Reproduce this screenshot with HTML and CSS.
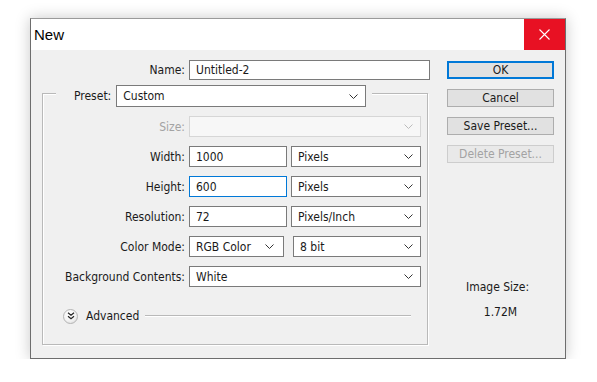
FILE: index.html
```html
<!DOCTYPE html>
<html lang="en">
<head>
  <meta charset="UTF-8">
  <title>New</title>
  <link rel="stylesheet" href="styles.css">
</head>
<body>
  <div class="window">
    <div class="titlebar">
      <span class="title">New</span>
      <div class="close">
        <svg width="11" height="11" viewBox="0 0 11 11"><path d="M0.5 0.5 L10.5 10.5 M10.5 0.5 L0.5 10.5" stroke="#fff" stroke-width="1.1" fill="none"/></svg>
      </div>
    </div>

    <div class="client">
      <div class="form">
        <div class="name-row">
          <span class="lbl">Name:</span>
          <input class="field" type="text" value="Untitled-2">
        </div>

        <div class="group">
          <div class="legend">
            <span class="lbl">Preset:</span>
            <div class="select preset">
              <span>Custom</span>
              <svg class="chev" width="9" height="5" viewBox="0 0 9 5"><path d="M0.5 0.5 L4.5 4.5 L8.5 0.5" fill="none" stroke="#333"/></svg>
            </div>
          </div>

          <div class="rows">
            <div class="row">
              <span class="lbl disabled">Size:</span>
              <div class="select full off">
                <span></span>
                <svg class="chev" width="9" height="5" viewBox="0 0 9 5"><path d="M0.5 0.5 L4.5 4.5 L8.5 0.5" fill="none" stroke="#bbb"/></svg>
              </div>
            </div>
            <div class="row">
              <span class="lbl">Width:</span>
              <div class="pair">
                <input class="field num" type="text" value="1000">
                <div class="select unit">
                  <span>Pixels</span>
                  <svg class="chev" width="9" height="5" viewBox="0 0 9 5"><path d="M0.5 0.5 L4.5 4.5 L8.5 0.5" fill="none" stroke="#333"/></svg>
                </div>
              </div>
            </div>
            <div class="row">
              <span class="lbl">Height:</span>
              <div class="pair">
                <input class="field num focus" type="text" value="600">
                <div class="select unit">
                  <span>Pixels</span>
                  <svg class="chev" width="9" height="5" viewBox="0 0 9 5"><path d="M0.5 0.5 L4.5 4.5 L8.5 0.5" fill="none" stroke="#333"/></svg>
                </div>
              </div>
            </div>
            <div class="row">
              <span class="lbl">Resolution:</span>
              <div class="pair">
                <input class="field num" type="text" value="72">
                <div class="select unit">
                  <span>Pixels/Inch</span>
                  <svg class="chev" width="9" height="5" viewBox="0 0 9 5"><path d="M0.5 0.5 L4.5 4.5 L8.5 0.5" fill="none" stroke="#333"/></svg>
                </div>
              </div>
            </div>
            <div class="row">
              <span class="lbl">Color Mode:</span>
              <div class="pair wide-gap">
                <div class="select mode">
                  <span>RGB Color</span>
                  <svg class="chev" width="9" height="5" viewBox="0 0 9 5"><path d="M0.5 0.5 L4.5 4.5 L8.5 0.5" fill="none" stroke="#333"/></svg>
                </div>
                <div class="select bits">
                  <span>8 bit</span>
                  <svg class="chev" width="9" height="5" viewBox="0 0 9 5"><path d="M0.5 0.5 L4.5 4.5 L8.5 0.5" fill="none" stroke="#333"/></svg>
                </div>
              </div>
            </div>
            <div class="row">
              <span class="lbl">Background Contents:</span>
              <div class="select full">
                <span>White</span>
                <svg class="chev" width="9" height="5" viewBox="0 0 9 5"><path d="M0.5 0.5 L4.5 4.5 L8.5 0.5" fill="none" stroke="#333"/></svg>
              </div>
            </div>
          </div>

          <div class="advanced">
            <span class="adv-btn">
              <svg width="8" height="8" viewBox="0 0 8 8"><path d="M1 0.8 L4 3.3 L7 0.8 M1 4.3 L4 6.8 L7 4.3" fill="none" stroke="#222" stroke-width="1.2"/></svg>
            </span>
            <span class="adv-text">Advanced</span>
            <span class="adv-line"></span>
          </div>
        </div>
      </div>

      <div class="side">
        <button class="btn default">OK</button>
        <button class="btn">Cancel</button>
        <button class="btn">Save Preset...</button>
        <button class="btn" disabled>Delete Preset...</button>
        <div class="image-size">
          <div class="size-lbl">Image Size:</div>
          <div class="size-val">1.72M</div>
        </div>
      </div>
    </div>
  </div>
</body>
</html>
```

FILE: styles.css
```css
:root {
  --face: #f0f0f0;
  --text: #1a1a1a;
  --muted: #a3a3a3;
  --edge: #7a7a7a;
  --accent: #0078d7;
}

body {
  margin: 0;
  background: #ffffff;
  font-family: 'DejaVu Sans Condensed', 'Liberation Sans', sans-serif;
  font-size: 12px;
  color: var(--text);
}

.window {
  box-sizing: border-box;
  width: 536px;
  height: 341px;
  margin: 18px 0 0 30px;
  border: 1px solid #6d6d6d;
  border-top-color: #9a9a9a;
  background: var(--face);
  box-shadow: 0 0 14px rgba(0, 0, 0, 0.22);
  display: flex;
  flex-direction: column;
}

.titlebar {
  height: 31px;
  background: #ffffff;
  display: flex;
  align-items: center;
  justify-content: space-between;
}

.title {
  font-family: 'Liberation Sans', sans-serif;
  font-size: 15px;
  padding-left: 3px;
  color: #000;
}

.close {
  width: 41px;
  height: 31px;
  background: #e81123;
  display: flex;
  align-items: center;
  justify-content: center;
}

.client {
  flex: 1;
  display: flex;
}

.form {
  padding: 10px 0 0 11px;
  width: 386px;
}

.lbl {
  text-align: right;
  white-space: nowrap;
}

.lbl.disabled {
  color: var(--muted);
}

.name-row {
  display: grid;
  grid-template-columns: 143px 241px;
  column-gap: 4px;
  align-items: center;
  height: 20px;
}

.field {
  box-sizing: border-box;
  height: 20px;
  margin: 0;
  padding: 0 6px;
  border: 1px solid var(--edge);
  background: #fff;
  font-family: inherit;
  font-size: 12px;
  color: var(--text);
  outline: none;
}

.field.focus {
  border-color: var(--accent);
}

.group {
  box-sizing: border-box;
  margin-top: 13px;
  width: 386px;
  height: 252px;
  border: 1px solid #b9b9b9;
  box-shadow: inset 1px 1px 0 #fff, 1px 1px 0 #fff;
}

.legend {
  display: flex;
  align-items: center;
  gap: 5px;
  width: fit-content;
  height: 22px;
  margin: -9px 0 0 13px;
  padding: 0 6px 0 18px;
  background: var(--face);
}

.select {
  box-sizing: border-box;
  height: 21px;
  padding: 0 7px 0 6px;
  border: 1px solid var(--edge);
  background: #fff;
  display: flex;
  align-items: center;
  justify-content: space-between;
}

.select.preset {
  width: 250px;
  height: 22px;
}

.select.full {
  width: 232px;
}

.select.off {
  border-color: #d6d6d6;
  background: #f7f7f7;
}

.rows {
  margin-top: 9px;
  display: flex;
  flex-direction: column;
  gap: 9px;
}

.row {
  display: grid;
  grid-template-columns: 142px auto;
  column-gap: 4px;
  align-items: center;
  height: 21px;
}

.pair {
  display: flex;
  gap: 4px;
}

.pair.wide-gap {
  gap: 9px;
}

.field.num {
  width: 98px;
  height: 21px;
}

.select.unit {
  width: 130px;
}

.select.mode {
  width: 95px;
  padding-right: 9px;
}

.select.bits {
  width: 128px;
}

.advanced {
  margin: 21px 16px 0 20px;
  height: 16px;
  display: flex;
  align-items: center;
}

.adv-btn {
  box-sizing: border-box;
  width: 15px;
  height: 15px;
  border-radius: 50%;
  border: 1px solid #b4b4b4;
  background: radial-gradient(circle at 40% 35%, #ffffff 0%, #f2f2f2 55%, #d4d4d4 100%);
  display: flex;
  align-items: center;
  justify-content: center;
}

.adv-text {
  margin-left: 8px;
}

.adv-line {
  flex: 1;
  margin-left: 6px;
  border-top: 1px solid #b9b9b9;
  border-bottom: 1px solid #fff;
}

.side {
  width: 107px;
  margin-left: 19px;
  padding-top: 11px;
  display: flex;
  flex-direction: column;
  gap: 10px;
}

.btn {
  box-sizing: border-box;
  height: 18px;
  margin: 0;
  padding: 0;
  border: 1px solid #adadad;
  background: #e1e1e1;
  font-family: inherit;
  font-size: 12px;
  color: var(--text);
}

.btn.default {
  border-color: var(--accent);
  box-shadow: inset 0 0 0 1px var(--accent);
}

.btn:disabled {
  border-color: #cdcdcd;
  background: #e9e9e9;
  color: var(--muted);
}

.image-size {
  margin-top: 107px;
  text-align: center;
  line-height: 15px;
}

.size-lbl {
  padding-right: 6px;
}

.size-val {
  margin-top: 10px;
}
```
